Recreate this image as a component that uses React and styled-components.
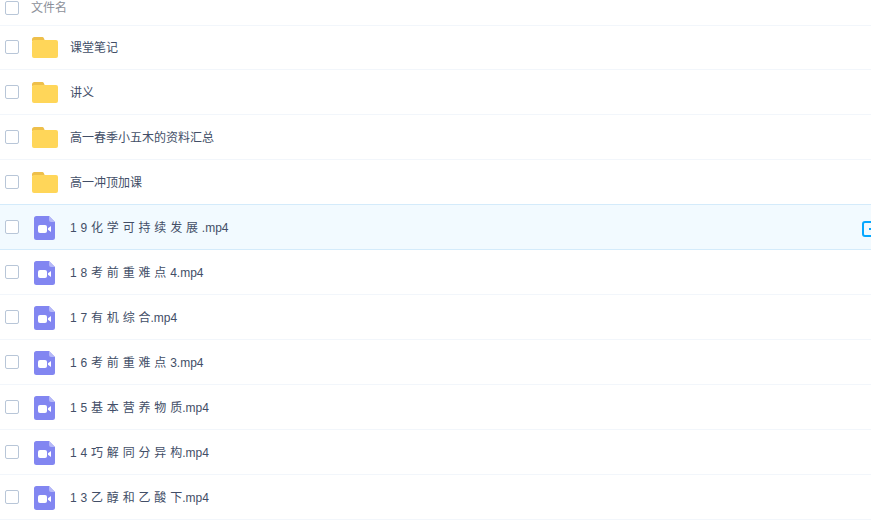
import React from 'react'
import styled, { createGlobalStyle } from 'styled-components'

const folders = ['课堂笔记', '讲义', '高一春季小五木的资料汇总', '高一冲顶加课']
const videos = [
  { name: '1 9 化 学 可 持 续 发 展 .mp4', active: true },
  { name: '1 8 考 前 重 难 点 4.mp4' },
  { name: '1 7 有 机 综 合.mp4' },
  { name: '1 6 考 前 重 难 点 3.mp4' },
  { name: '1 5 基 本 营 养 物 质.mp4' },
  { name: '1 4 巧 解 同 分 异 构.mp4' },
  { name: '1 3 乙 醇 和 乙 酸 下.mp4' },
]

const GlobalStyle = createGlobalStyle`
  html, body {
    margin: 0;
    padding: 0;
    height: 100%;
    overflow: hidden;
    background: #fff;
  }
  body {
    font-family: "Liberation Sans", "Noto Sans CJK SC", sans-serif;
    font-size: 12px;
  }
`

const List = styled.div`
  width: 871px;
  height: 520px;
  overflow: hidden;
`

// the header is scrolled slightly out of the top of the window
const HeaderRow = styled.div`
  height: 34px;
  margin-top: -9px;
  box-sizing: border-box;
  display: flex;
  align-items: center;
  padding-left: 5px;
  color: #8c9099;
  position: relative;
  z-index: 1;
  box-shadow: 0 1px 0 #f2f6fb;
`

const Row = styled.div`
  height: 45px;
  box-sizing: border-box;
  display: flex;
  align-items: center;
  padding-left: 5px;
  position: relative;
  background: ${props => (props.$active ? '#f2faff' : '#fff')};
  border-bottom: 1px solid ${props => (props.$active ? '#d4ebfb' : '#f2f6fb')};
  box-shadow: ${props => (props.$active ? '0 -1px 0 #d4ebfb' : 'none')};
  color: #424e67;
`

const Check = styled.span`
  width: 12px;
  height: 12px;
  flex: none;
  border: 1px solid #b8c6d8;
  border-radius: 2px;
  background: #fff;
`

const IconSlot = styled.span`
  width: 28px;
  height: 28px;
  flex: none;
  margin-left: 12px;
  display: flex;
  align-items: center;
  justify-content: center;
`

const Name = styled.span`
  margin-left: 11px;
  margin-top: 2px;
  white-space: pre;
  line-height: 18px;
  word-spacing: 0.5px;
`

const HeaderLabel = styled.span`
  margin-left: 12px;
  margin-top: -4px;
`

const ActionIcon = styled.svg`
  position: absolute;
  right: -9px;
  top: 16px;
`

const VideoSvg = styled.svg`
  margin-top: 2px;
  margin-right: 1px;
`

const FolderIcon = () => (
  <svg width="26" height="21" viewBox="0 0 26 21">
    <path d="M0 2.500C0 1.100 1 0 2.400 0h7.400c1 0 1.800.5 2.200 1.400L13 4H0z" fill="#eebf4a" />
    <rect x="0" y="3" width="26" height="18" rx="2" fill="#ffd659" />
  </svg>
)

const VideoIcon = () => (
  <VideoSvg width="21" height="24" viewBox="0 0 21 24">
    <path d="M2.500 0H15l6 6v15.500a2.500 2.500 0 0 1-2.500 2.500h-16A2.500 2.500 0 0 1 0 21.500v-19A2.500 2.500 0 0 1 2.500 0z" fill="#8286f1" />
    <path d="M15 0l6 6h-4a2 2 0 0 1-2-2z" fill="#b5b8f8" />
    <rect x="4" y="9" width="9" height="8" rx="2" fill="#fff" />
    <path d="M14 12.200L17 10v6l-3-2.200z" fill="#fff" />
  </VideoSvg>
)

const App = () => (
  <List>
    <GlobalStyle />
    <HeaderRow>
      <Check />
      <HeaderLabel>文件名</HeaderLabel>
    </HeaderRow>
    {folders.map(name => (
      <Row key={name}>
        <Check />
        <IconSlot><FolderIcon /></IconSlot>
        <Name>{name}</Name>
      </Row>
    ))}
    {videos.map(v => (
      <Row key={v.name} $active={v.active}>
        <Check />
        <IconSlot><VideoIcon /></IconSlot>
        <Name>{v.name}</Name>
        {v.active && (
          <ActionIcon width="18" height="16" viewBox="0 0 18 16" fill="none">
            <rect x="1" y="1" width="14" height="14" rx="2" stroke="#06a7ff" strokeWidth="2" />
            <path d="M7 8h8" stroke="#06a7ff" strokeWidth="2" />
          </ActionIcon>
        )}
      </Row>
    ))}
  </List>
)

export default App
